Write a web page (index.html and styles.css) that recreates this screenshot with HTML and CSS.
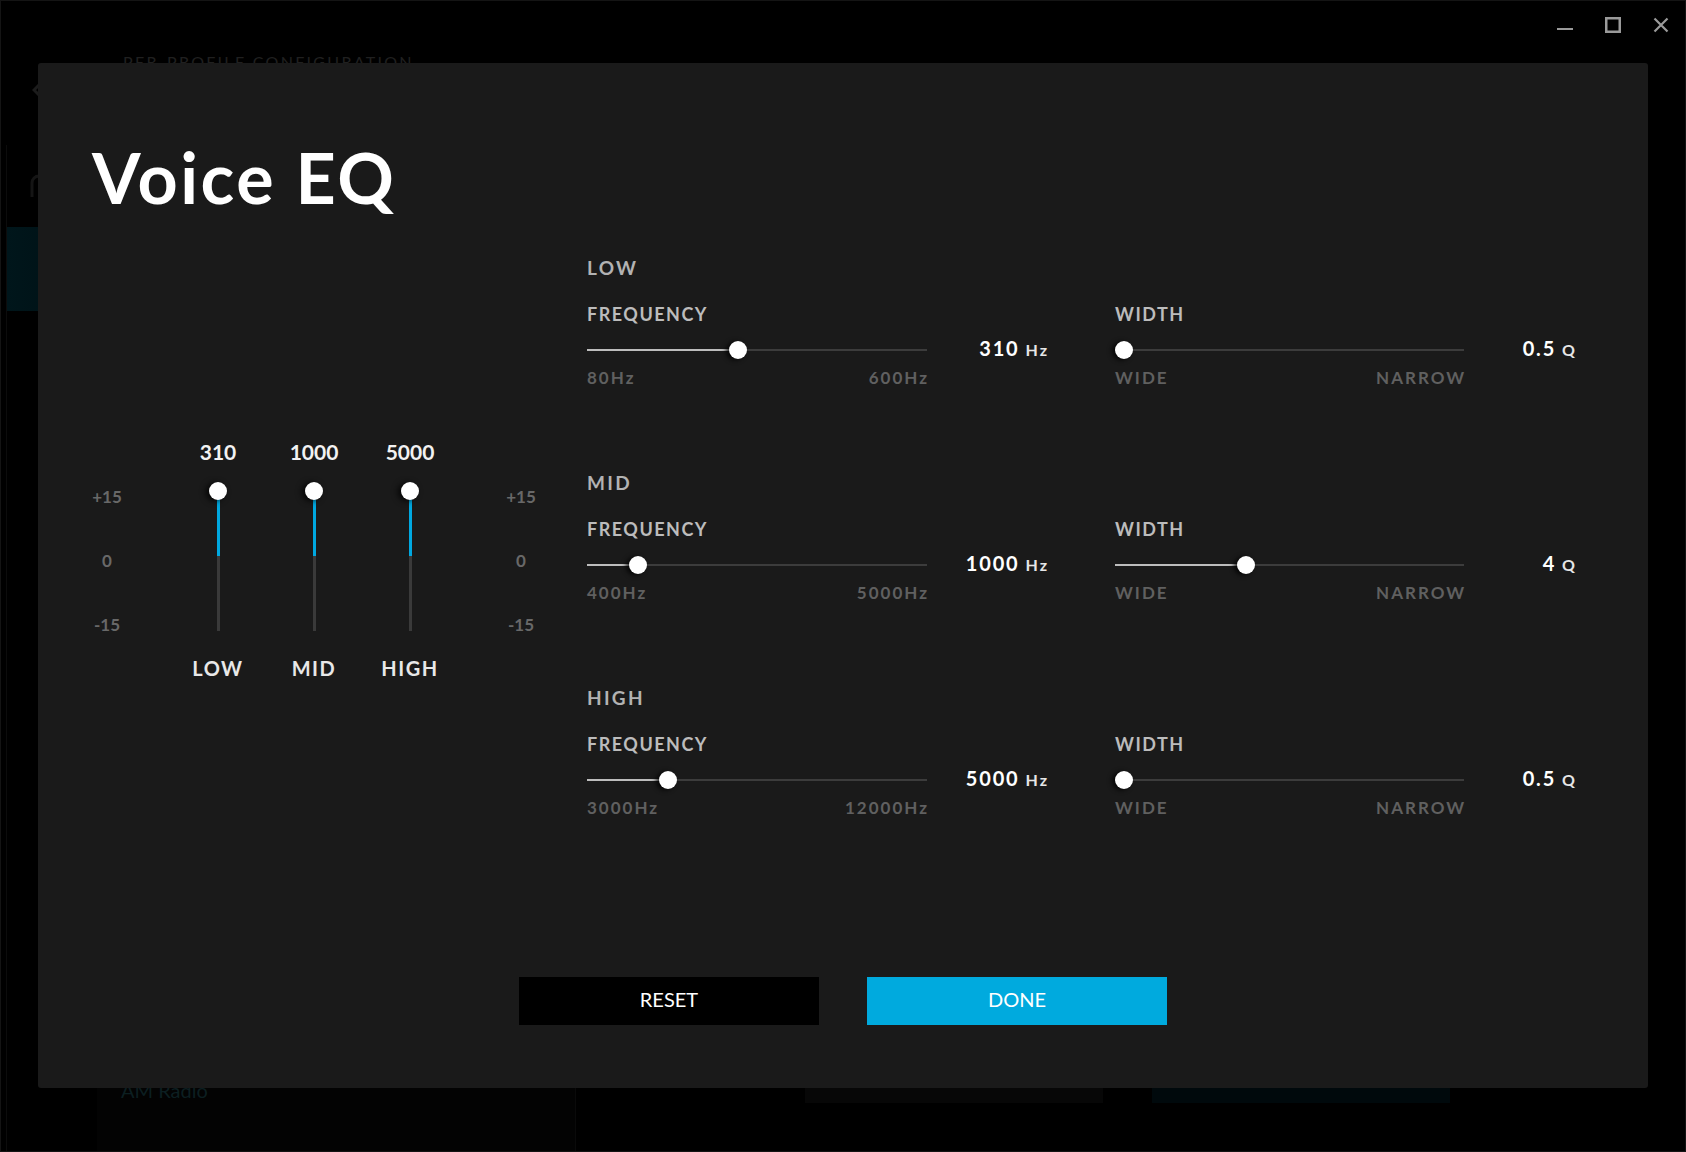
FILE: index.html
```html
<!DOCTYPE html>
<html lang="en">
<head>
<meta charset="utf-8">
<title>Voice EQ</title>
<link rel="stylesheet" href="styles.css">
</head>
<body>
<div class="window">
  <header class="titlebar">
    <button class="winctl" aria-label="Minimize">
      <svg width="16" height="16" viewBox="0 0 16 16"><rect x="0" y="11" width="16" height="2" fill="#9a9a9a"/></svg>
    </button>
    <button class="winctl" aria-label="Maximize">
      <svg width="16" height="16" viewBox="0 0 16 16"><rect x="1.25" y="1.25" width="13.5" height="13.5" fill="none" stroke="#9a9a9a" stroke-width="2.5"/></svg>
    </button>
    <button class="winctl" aria-label="Close">
      <svg width="16" height="16" viewBox="0 0 16 16"><path d="M1.5 1.5 L14.5 14.5 M14.5 1.5 L1.5 14.5" stroke="#9a9a9a" stroke-width="2.2" fill="none"/></svg>
    </button>
  </header>
  <div class="app">
    <aside class="sidebar">
      <div class="back">
        <svg width="12" height="16" viewBox="0 0 12 16"><path d="M9 1 L2 8 L9 15" fill="none" stroke="#1c1c1c" stroke-width="3"/></svg>
      </div>
      <div class="side-panel">
        <div class="side-icon">
          <svg width="20" height="30" viewBox="0 0 20 30"><path d="M3 28 V14 a7 7 0 0 1 14 0 V28" fill="none" stroke="#151515" stroke-width="3"/></svg>
        </div>
        <div class="side-item"></div>
      </div>
    </aside>
    <main class="main">
      <div class="page-title">PER-PROFILE CONFIGURATION</div>
      <div class="main-spacer"></div>
      <div class="main-bottom">
        <div class="list-panel"><div class="list-item">AM Radio</div></div>
        <div class="bg-actions">
          <div class="bg-btn"></div>
          <div class="bg-btn bg-btn-primary"></div>
        </div>
      </div>
    </main>
  </div>
</div>

<section class="modal">
  <h1 class="modal-title">Voice EQ</h1>
  <div class="modal-body">
    <div class="eq">
      <div class="eq-scale">
        <span>+15</span><span>0</span><span>-15</span>
      </div>
      <div class="eq-bands">
        <div class="eq-band">
          <div class="eq-value">310</div>
          <div class="vtrack"><div class="vfill" style="height:65px"></div><div class="vknob"></div></div>
          <div class="eq-label">LOW</div>
        </div>
        <div class="eq-band">
          <div class="eq-value">1000</div>
          <div class="vtrack"><div class="vfill" style="height:65px"></div><div class="vknob"></div></div>
          <div class="eq-label">MID</div>
        </div>
        <div class="eq-band">
          <div class="eq-value">5000</div>
          <div class="vtrack"><div class="vfill" style="height:65px"></div><div class="vknob"></div></div>
          <div class="eq-label">HIGH</div>
        </div>
      </div>
      <div class="eq-scale">
        <span>+15</span><span>0</span><span>-15</span>
      </div>
    </div>

    <div class="bands">
      <div class="band">
        <div class="band-title">LOW</div>
        <div class="params">
          <div class="param">
            <div class="param-label">FREQUENCY</div>
            <div class="param-row">
              <div class="htrack htrack-freq"><div class="hfill" style="width:151px"></div><div class="hknob" style="left:151px"></div></div>
              <div class="param-value">310<span class="unit">Hz</span></div>
            </div>
            <div class="range range-freq"><span>80Hz</span><span>600Hz</span></div>
          </div>
          <div class="param">
            <div class="param-label">WIDTH</div>
            <div class="param-row">
              <div class="htrack htrack-width"><div class="hfill" style="width:9px"></div><div class="hknob" style="left:9px"></div></div>
              <div class="param-value">0.5<span class="unit">Q</span></div>
            </div>
            <div class="range range-width"><span>WIDE</span><span>NARROW</span></div>
          </div>
        </div>
      </div>

      <div class="band">
        <div class="band-title">MID</div>
        <div class="params">
          <div class="param">
            <div class="param-label">FREQUENCY</div>
            <div class="param-row">
              <div class="htrack htrack-freq"><div class="hfill" style="width:51px"></div><div class="hknob" style="left:51px"></div></div>
              <div class="param-value">1000<span class="unit">Hz</span></div>
            </div>
            <div class="range range-freq"><span>400Hz</span><span>5000Hz</span></div>
          </div>
          <div class="param">
            <div class="param-label">WIDTH</div>
            <div class="param-row">
              <div class="htrack htrack-width"><div class="hfill" style="width:131px"></div><div class="hknob" style="left:131px"></div></div>
              <div class="param-value">4<span class="unit">Q</span></div>
            </div>
            <div class="range range-width"><span>WIDE</span><span>NARROW</span></div>
          </div>
        </div>
      </div>

      <div class="band">
        <div class="band-title">HIGH</div>
        <div class="params">
          <div class="param">
            <div class="param-label">FREQUENCY</div>
            <div class="param-row">
              <div class="htrack htrack-freq"><div class="hfill" style="width:81px"></div><div class="hknob" style="left:81px"></div></div>
              <div class="param-value">5000<span class="unit">Hz</span></div>
            </div>
            <div class="range range-freq"><span>3000Hz</span><span>12000Hz</span></div>
          </div>
          <div class="param">
            <div class="param-label">WIDTH</div>
            <div class="param-row">
              <div class="htrack htrack-width"><div class="hfill" style="width:9px"></div><div class="hknob" style="left:9px"></div></div>
              <div class="param-value">0.5<span class="unit">Q</span></div>
            </div>
            <div class="range range-width"><span>WIDE</span><span>NARROW</span></div>
          </div>
        </div>
      </div>
    </div>
  </div>

  <div class="modal-actions">
    <button class="btn btn-reset">RESET</button>
    <button class="btn btn-done">DONE</button>
  </div>
</section>
</body>
</html>
```
FILE: styles.css
```css
html, body {
  margin: 0;
  padding: 0;
}
body {
  width: 1686px;
  height: 1152px;
  background: #000;
  overflow: hidden;
  position: relative;
  font-family: "Lato", "Open Sans", sans-serif;
  color: #fff;
}

/* ---------- background application ---------- */
.window {
  box-sizing: border-box;
  height: 1152px;
  border: 1px solid #141414;
  display: flex;
  flex-direction: column;
}
.titlebar {
  height: 48px;
  display: flex;
  justify-content: flex-end;
  flex: none;
}
.winctl {
  width: 48px;
  height: 48px;
  border: 0;
  padding: 0;
  background: transparent;
  display: flex;
  align-items: center;
  justify-content: center;
}
.winctl svg { display: block; }

.app {
  flex: 1;
  display: flex;
  min-height: 0;
}
.sidebar {
  width: 84px;
  margin-left: 5px;
  display: flex;
  flex-direction: column;
  flex: none;
}
.back {
  margin-top: 33px;
  padding-left: 26px;
  height: 16px;
}
.back svg { display: block; }
.side-panel {
  margin-top: 47px;
  flex: 1;
  border-left: 1px solid #0c0c0c;
}
.side-icon {
  margin-top: 24px;
  padding-left: 22px;
  height: 34px;
}
.side-icon svg { display: block; }
.side-item {
  margin-top: 24px;
  height: 84px;
  background: linear-gradient(90deg, #00161b, #001014);
}

.main {
  flex: 1;
  display: flex;
  flex-direction: column;
}
.page-title {
  margin-top: 3px;
  padding-left: 33px;
  font-size: 16px;
  line-height: 20px;
  letter-spacing: 2.3px;
  color: #202020;
}
.main-spacer { flex: 1; }
.main-bottom {
  height: 100px;
  display: flex;
  align-items: flex-start;
}
.list-panel {
  margin-left: 7px;
  width: 478px;
  height: 100px;
  background: #030303;
  border-right: 1px solid #0a0a0a;
}
.list-item {
  padding: 27px 0 0 24px;
  font-size: 20px;
  line-height: 24px;
  color: #0c1f21;
}
.bg-actions {
  margin-left: 229px;
  margin-top: 4px;
  display: flex;
  gap: 49px;
}
.bg-btn {
  width: 298px;
  height: 48px;
  background: #070707;
}
.bg-btn-primary { background: #00090c; }

/* ---------- modal ---------- */
.modal {
  position: absolute;
  left: 38px;
  top: 63px;
  width: 1610px;
  height: 1025px;
  box-sizing: border-box;
  padding: 79px 54px 63px 54px;
  background: #1a1a1a;
  border-radius: 3px;
  display: flex;
  flex-direction: column;
}
.modal-title {
  margin: 0;
  font-size: 70px;
  line-height: 70px;
  font-weight: 700;
  letter-spacing: 2.5px;
  color: #fff;
}
.modal-body {
  margin-top: 44px;
  display: grid;
  grid-template-columns: 495px 1fr;
}

/* vertical EQ */
.eq {
  display: flex;
  align-items: flex-start;
  gap: 48px;
  padding-top: 184px;
}
.eq-scale {
  width: 30px;
  margin-top: 47px;
  display: flex;
  flex-direction: column;
  gap: 44px;
  text-align: center;
  font-size: 17px;
  line-height: 20px;
  font-weight: 700;
  color: #686868;
}
.eq-bands { display: flex; }
.eq-band {
  width: 96px;
  display: flex;
  flex-direction: column;
  align-items: center;
}
.eq-value {
  font-size: 21px;
  line-height: 24px;
  font-weight: 700;
  color: #f2f2f2;
}
.vtrack {
  position: relative;
  width: 3px;
  height: 140px;
  margin-top: 27px;
  background: #3a3a3a;
}
.vfill {
  position: absolute;
  left: 0;
  top: 0;
  width: 100%;
  background: #00a8e0;
}
.vknob {
  position: absolute;
  left: 50%;
  top: -9px;
  width: 18px;
  height: 18px;
  margin-left: -9px;
  border-radius: 50%;
  background: #fff;
  box-shadow: -3px 1px 6px rgba(0, 0, 0, 0.85);
}
.eq-label {
  margin-top: 25px;
  font-size: 20px;
  line-height: 24px;
  font-weight: 700;
  letter-spacing: 1.5px;
  color: #e8e8e8;
}

/* parameter bands */
.bands {
  display: flex;
  flex-direction: column;
}
.band { height: 215px; }
.band-title {
  font-size: 19px;
  line-height: 24px;
  font-weight: 700;
  letter-spacing: 2.3px;
  color: #b2b2b2;
}
.params {
  margin-top: 24px;
  display: flex;
  gap: 68px;
}
.param { width: 460px; }
.param-label {
  font-size: 18px;
  line-height: 20px;
  font-weight: 700;
  letter-spacing: 1.5px;
  color: #bcbcbc;
}
.param-row {
  margin-top: 14px;
  height: 24px;
  display: flex;
  align-items: center;
}
.htrack {
  position: relative;
  height: 2px;
  flex: none;
  background: #3c3c3c;
}
.htrack-freq { width: 340px; }
.htrack-width { width: 349px; }
.hfill {
  position: absolute;
  left: 0;
  top: 0;
  height: 100%;
  background: #bdbdbd;
}
.hknob {
  position: absolute;
  top: 50%;
  width: 18px;
  height: 18px;
  margin: -9px 0 0 -9px;
  border-radius: 50%;
  background: #fff;
  box-shadow: -3px 1px 5px rgba(0, 0, 0, 0.85);
}
.param-value {
  flex: 1;
  text-align: right;
  font-size: 20px;
  line-height: 24px;
  font-weight: 700;
  letter-spacing: 1.8px;
  color: #fff;
  margin-top: -2px;
}
.unit {
  margin-left: 6px;
  margin-right: -2px;
  font-size: 16px;
  letter-spacing: 2px;
  color: #e6e6e6;
}
.range {
  margin-top: 7px;
  display: flex;
  justify-content: space-between;
  font-size: 17px;
  line-height: 18px;
  font-weight: 700;
  letter-spacing: 2px;
  color: #606060;
}
.range span:last-child { margin-right: -2px; }
.range-freq { width: 340px; }
.range-width { width: 349px; }

/* footer buttons */
.modal-actions {
  margin-top: auto;
  display: flex;
  justify-content: center;
  gap: 48px;
}
.btn {
  width: 300px;
  height: 48px;
  border: 0;
  padding: 0 0 4px;
  font-family: "Lato", "Open Sans", sans-serif;
  font-size: 20px;
  font-weight: 400;
  color: #fff;
}
.btn-reset { background: #000; }
.btn-done { background: #00aade; }
```
